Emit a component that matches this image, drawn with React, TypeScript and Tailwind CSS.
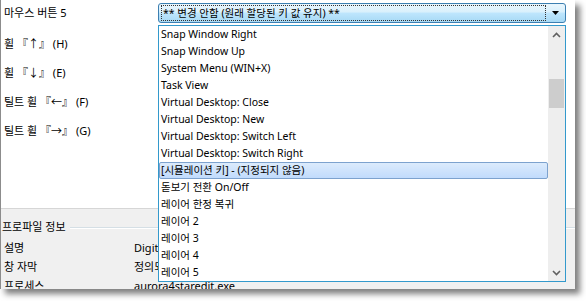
import React from "react";

const ITEMS = [
  "Snap Window Right",
  "Snap Window Up",
  "System Menu (WIN+X)",
  "Task View",
  "Virtual Desktop: Close",
  "Virtual Desktop: New",
  "Virtual Desktop: Switch Left",
  "Virtual Desktop: Switch Right",
  "[시뮬레이션 키] - (지정되지 않음)",
  "돋보기 전환 On/Off",
  "레이어 한정 복귀",
  "레이어 2",
  "레이어 3",
  "레이어 4",
  "레이어 5",
];

const SELECTED = 8;

const ROWS = ["휠 『↑』 (H)", "휠 『↓』 (E)", "틸트 휠 『←』 (F)", "틸트 휠 『→』 (G)"];

// values sit under the open list, only their left part shows
const INFO = [
  { label: "설명", value: "Digital Mouse", clip: true },
  { label: "창 자막", value: "정의되지 않음", clip: true },
  { label: "프로세스", value: "aurora4staredit.exe", clip: false },
];

function Chevron({ down }: { down?: boolean }) {
  return (
    <svg width="9" height="6" viewBox="0 0 9 6" className="block">
      <polyline
        points={down ? "1,1 4.5,4.5 8,1" : "1,5 4.5,1.5 8,5"}
        fill="none"
        stroke="#606060"
        strokeWidth="1.6"
      />
    </svg>
  );
}

export default function App() {
  return (
    <div className="w-[586px] h-[301px] bg-white overflow-hidden text-[10.5px] text-black font-['Noto_Sans','Noto_Sans_CJK_KR',sans-serif]">
      <div className="relative w-[575px] h-[289px] border-l border-[#8c8c8c] bg-white flex flex-col overflow-hidden shadow-[5px_5px_6px_rgba(0,0,0,0.5)]">
        {/* key mapping rows */}
        <div className="h-[209px] shrink-0 flex flex-col border-b border-[#d6d6d6]">
          <div className="h-[26px] flex items-center">
            <span className="w-[157px] pl-[3px] leading-[16px] text-[11px]">마우스 버튼 5</span>
            <div className="w-[408px] h-[20px] mt-[3px] self-start flex items-center rounded-[3px] border border-[#3c7fb1] bg-[linear-gradient(#eaf6fd_0%,#d9f0fc_45%,#bee6fd_50%,#a7d9f5_100%)]">
              <div className="ml-[2px] w-[385px] h-[16px] border border-dotted border-[#333] flex items-center pl-[1px] leading-[14px] whitespace-nowrap">
                ** 변경 안함 (원래 할당된 키 값 유지) **
              </div>
              <div className="flex-1 flex justify-center">
                <svg width="7" height="4" viewBox="0 0 7 4">
                  <polygon points="0,0 7,0 3.5,4" fill="#000" />
                </svg>
              </div>
            </div>
          </div>
          <div className="pt-[3px] flex flex-col">
            {ROWS.map((r) => (
              <div key={r} className="h-[29px] flex items-center pl-[3px] leading-[16px] text-[11px] whitespace-nowrap">
                {r}
              </div>
            ))}
          </div>
        </div>

        {/* profile info */}
        <div className="flex-1 bg-[#f0f0f0] flex flex-col pt-[9px] overflow-hidden">
          <div className="h-[18px] shrink-0 flex items-center">
            <span className="pl-[1px] pr-[4px] leading-[16px] text-[11px]">프로파일 정보</span>
            <div className="flex-1 h-[2px] border-t border-[#d5dfe5] border-b border-b-white mt-[1px]" />
          </div>
          <div className="pt-[2px] flex flex-col shrink-0">
            {INFO.map((r) => (
              <div key={r.label} className="h-[19px] shrink-0 flex items-center leading-[16px] text-[11px]">
                <span className="w-[133px] pl-[3px]">{r.label}</span>
                <span className={r.clip ? "w-[24px] overflow-hidden whitespace-nowrap" : "whitespace-nowrap"}>
                  {r.value}
                </span>
              </div>
            ))}
          </div>
        </div>

        {/* open dropdown list */}
        <div className="absolute left-[157px] top-[25px] w-[408px] h-[257px] border border-[#3399cc] bg-white flex">
          <div className="flex-1 flex flex-col">
            {ITEMS.map((it, i) => (
              <div
                key={it}
                className={
                  i === SELECTED
                    ? "h-[17px] flex items-center pl-[1px] rounded-[2px] border border-[#7da2ce] bg-[linear-gradient(#dcebfc,#c1dbfc)] leading-[15px] whitespace-nowrap"
                    : "h-[17px] flex items-center pl-[2px] leading-[15px] whitespace-nowrap"
                }
              >
                {it}
              </div>
            ))}
          </div>
          <div className="w-[17px] bg-[#eeeeee] flex flex-col items-center">
            <div className="h-[17px] flex items-center justify-center">
              <Chevron />
            </div>
            <div className="mt-[36px] w-[15px] h-[29px] bg-[#cdcdcd]" />
            <div className="flex-1" />
            <div className="h-[17px] flex items-center justify-center">
              <Chevron down />
            </div>
          </div>
        </div>
      </div>
    </div>
  );
}
